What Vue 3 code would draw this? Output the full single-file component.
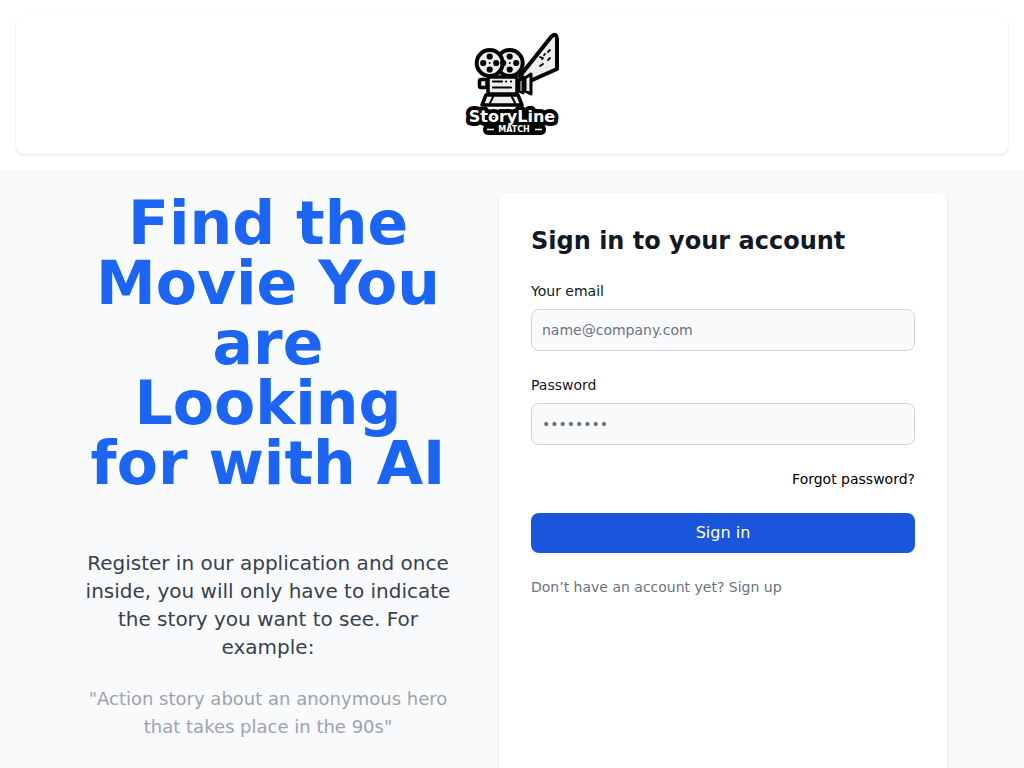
<script setup>
import { ref } from 'vue'

const email = ref('')
const password = ref('')
</script>

<template>
  <div class="page">
    <header class="top">
      <div class="brand">
        <svg class="logo" viewBox="0 0 104 112" role="img" aria-label="StoryLine Match">
          <g stroke="#050505" stroke-linejoin="round" stroke-linecap="round">
            <path d="M60 48 L91 9 Q94 6 95.500 7 Q97 8 97 11 V41 L70 53 Z" fill="#efeff1" stroke-width="4" />
            <path d="M88 24l2-2M80 29l3 1-1 1M88 32l2-2M84 27l1-1M80 38l3-2" fill="none" stroke-width="1.8" />
            <path d="M27 51.5H21Q19.5 51.5 19.5 53V58Q19.5 59.5 21 59.5H27Z" fill="#efeff1" stroke-width="3.5" />
            <path d="M59 52l4-3v16l-4-2ZM65 50l6-4v20l-6-3Z" fill="#efeff1" stroke-width="3" />
            <circle cx="49.7" cy="35" r="13" fill="#efeff1" stroke-width="4" />
            <circle cx="29.7" cy="35" r="13" fill="#efeff1" stroke-width="4" />
            <path d="M26 67h32l4 10H22Z" fill="#efeff1" stroke-width="3.5" />
            <path d="M33 69l-3 6M52 69l3 6" fill="none" stroke-width="2" />
            <rect x="28" y="49" width="29" height="17" rx="2" fill="#efeff1" stroke-width="3.5" />
            <path d="M33 53.5h9M46 53.5h.1M51 53.5h.1M33 59.5h18" fill="none" stroke-width="2.2" />
          </g>
          <g fill="#050505">
            <circle cx="29.7" cy="28.5" r="3.1" /><circle cx="29.7" cy="41.5" r="3.1" />
            <circle cx="23.2" cy="35" r="3.1" /><circle cx="36.2" cy="35" r="3.1" />
            <circle cx="49.7" cy="28.5" r="3.1" /><circle cx="49.7" cy="41.5" r="3.1" />
            <circle cx="43.2" cy="35" r="3.1" /><circle cx="56.2" cy="35" r="3.1" />
            <circle cx="29.7" cy="35" r="1" /><circle cx="49.7" cy="35" r="1" />
            <rect x="23" y="96" width="63" height="11" rx="5" />
          </g>
          <text class="logo-name" x="52" y="94" text-anchor="middle">StoryLine</text>
          <text class="logo-sub" x="54" y="104" text-anchor="middle">MATCH</text>
          <path d="M27 101.5h7M75 101.5h7" stroke="#fff" stroke-width="1.5" />
        </svg>
      </div>
    </header>

    <main class="content">
      <section class="intro">
        <h1>Find the Movie You are Looking for with AI</h1>
        <p class="lead">Register in our application and once inside, you will only have to indicate the story you want to see. For example:</p>
        <p class="quote">"Action story about an anonymous hero that takes place in the 90s"</p>
      </section>

      <section class="card">
        <h2>Sign in to your account</h2>
        <form @submit.prevent>
          <div class="field">
            <label for="email">Your email</label>
            <input id="email" v-model="email" type="email" placeholder="name@company.com" />
          </div>
          <div class="field">
            <label for="password">Password</label>
            <input id="password" v-model="password" type="password" placeholder="••••••••" />
          </div>
          <a class="forgot" href="#">Forgot password?</a>
          <button type="submit">Sign in</button>
          <p class="signup">Don’t have an account yet? <a href="#">Sign up</a></p>
        </form>
      </section>
    </main>
  </div>
</template>

<style>
body {
  margin: 0;
  background: #f9fafb;
}
</style>

<style scoped>
.page {
  font-family: "DejaVu Sans", sans-serif;
  color: #111827;
}
.page * {
  box-sizing: border-box;
}
h1, h2, p {
  margin: 0;
}
.top {
  padding: 16px;
  background: #fff;
}
.brand {
  display: flex;
  justify-content: center;
  padding: 12px 16px 14px;
  border-radius: 8px;
  background: #fff;
  box-shadow: 0 1px 3px rgba(0, 0, 0, 0.1), 0 1px 2px -1px rgba(0, 0, 0, 0.1);
}
.logo {
  display: block;
  width: 104px;
  height: 112px;
}
.logo-name {
  font: bold 16px "DejaVu Sans", sans-serif;
  fill: #fff;
  stroke: #050505;
  stroke-width: 8px;
  stroke-linejoin: round;
  paint-order: stroke;
}
.logo-sub {
  font: bold 8px "DejaVu Sans", sans-serif;
  fill: #fff;
}
.content {
  display: grid;
  grid-template-columns: minmax(0, 1fr) 448px;
  gap: 40px;
  max-width: 1024px;
  min-height: 100vh;
  margin: 0 auto;
  padding: 23px 77px 48px;
  box-sizing: border-box;
}
.intro {
  text-align: center;
}
h1 {
  font-size: 60px;
  line-height: 60px;
  font-weight: 700;
  color: #1c64f2;
}
.lead {
  margin-top: 56px;
  font-size: 20px;
  line-height: 28px;
  color: #374151;
}
.quote {
  margin-top: 24px;
  font-size: 18px;
  line-height: 28px;
  color: #9ca3af;
}
.card {
  padding: 32px;
  border-radius: 8px;
  background: #fff;
  box-shadow: 0 1px 3px rgba(0, 0, 0, 0.1), 0 1px 2px -1px rgba(0, 0, 0, 0.1);
}
h2 {
  font-size: 24px;
  line-height: 32px;
  font-weight: 700;
}
form {
  display: flex;
  flex-direction: column;
  gap: 24px;
  margin-top: 24px;
  font-size: 14px;
  line-height: 20px;
}
.field {
  display: flex;
  flex-direction: column;
  gap: 8px;
}
input {
  width: 100%;
  height: 42px;
  padding: 10px;
  border: 1px solid #d1d5db;
  border-radius: 8px;
  background: #f9fafb;
  color: #111827;
  font: 14px/20px "DejaVu Sans", sans-serif;
}
input::placeholder {
  color: #6b7280;
}
.forgot {
  align-self: flex-end;
  color: #000;
  text-decoration: none;
}
button {
  height: 40px;
  border: 0;
  border-radius: 8px;
  background: #1a56db;
  color: #fff;
  font: 16px/24px "DejaVu Sans", sans-serif;
  cursor: pointer;
}
.signup {
  color: #6b7280;
}
.signup a {
  color: inherit;
  text-decoration: none;
}
</style>
